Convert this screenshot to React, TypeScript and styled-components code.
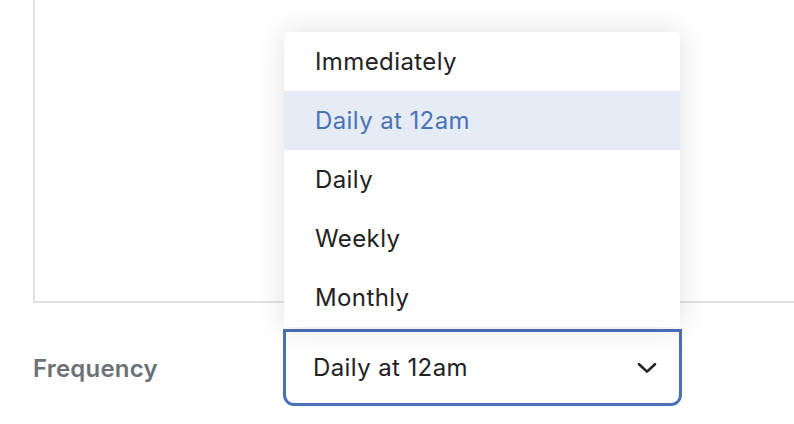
import styled, { createGlobalStyle } from "styled-components";

const GlobalStyle = createGlobalStyle`
    html, body {
        margin: 0;
        padding: 0;
        background: #ffffff;
        overflow: hidden;
    }
    body {
        font-family: Inter, "Noto Sans", sans-serif;
        color: #222222;
    }
`;

const options = ["Immediately", "Daily at 12am", "Daily", "Weekly", "Monthly"];

export default function App() {
    const selected = "Daily at 12am";

    return (
        <Page>
            <GlobalStyle />
            <MessageBox />
            <FieldRow>
                <FieldLabel>Frequency</FieldLabel>
                <SelectWrap>
                    <Menu>
                        {options.map((option) => (
                            <MenuItem key={option} $active={option === selected}>
                                {option}
                            </MenuItem>
                        ))}
                    </Menu>
                    <SelectBox>
                        <span>{selected}</span>
                        <svg width="20" height="12" viewBox="0 0 20 12" fill="none">
                            <path
                                d="M2 2.2 L10 9.6 L18 2.2"
                                stroke="#222222"
                                strokeWidth="2.6"
                                strokeLinecap="round"
                                strokeLinejoin="round"
                            />
                        </svg>
                    </SelectBox>
                </SelectWrap>
            </FieldRow>
        </Page>
    );
}

const Page = styled.div`
    width: 794px;
    height: 424px;
    padding-left: 33px;
    box-sizing: border-box;
    display: flex;
    flex-direction: column;
`;

const MessageBox = styled.div`
    width: 761px;
    height: 303px;
    flex-shrink: 0;
    border-left: 2px solid #e2e2e2;
    border-bottom: 2px solid #e2e2e2;
    box-sizing: border-box;
`;

const FieldRow = styled.div`
    display: flex;
    align-items: center;
    margin-top: 26px;
`;

const FieldLabel = styled.label`
    width: 250px;
    font-size: 24px;
    font-weight: 600;
    letter-spacing: 0.2px;
    color: #6b7275;
    padding-top: 2px;
`;

const SelectWrap = styled.div`
    position: relative;
    width: 399px;
`;

const SelectBox = styled.div`
    height: 77px;
    box-sizing: border-box;
    border: 3px solid #4a70b6;
    border-radius: 0 0 11px 11px;
    display: flex;
    align-items: center;
    justify-content: space-between;
    padding: 0 22px 0 27px;
    font-size: 24px;
    letter-spacing: 0.4px;
    color: #222222;
    background: #ffffff;
`;

const Menu = styled.ul`
    position: absolute;
    left: 1px;
    right: 2px;
    bottom: calc(100% + 2px);
    margin: 0;
    padding: 0;
    list-style: none;
    background: #ffffff;
    border-radius: 6px 6px 0 0;
    overflow: hidden;
    box-shadow: 0 0 28px rgba(40, 40, 60, 0.14);
    z-index: 2;
`;

const MenuItem = styled.li<{ $active?: boolean }>`
    height: 59px;
    display: flex;
    align-items: center;
    padding-left: 31px;
    font-size: 24px;
    letter-spacing: 0.4px;
    color: ${(p) => (p.$active ? "#4a72b8" : "#222222")};
    background: ${(p) => (p.$active ? "#e6ecf6" : "#ffffff")};
`;
